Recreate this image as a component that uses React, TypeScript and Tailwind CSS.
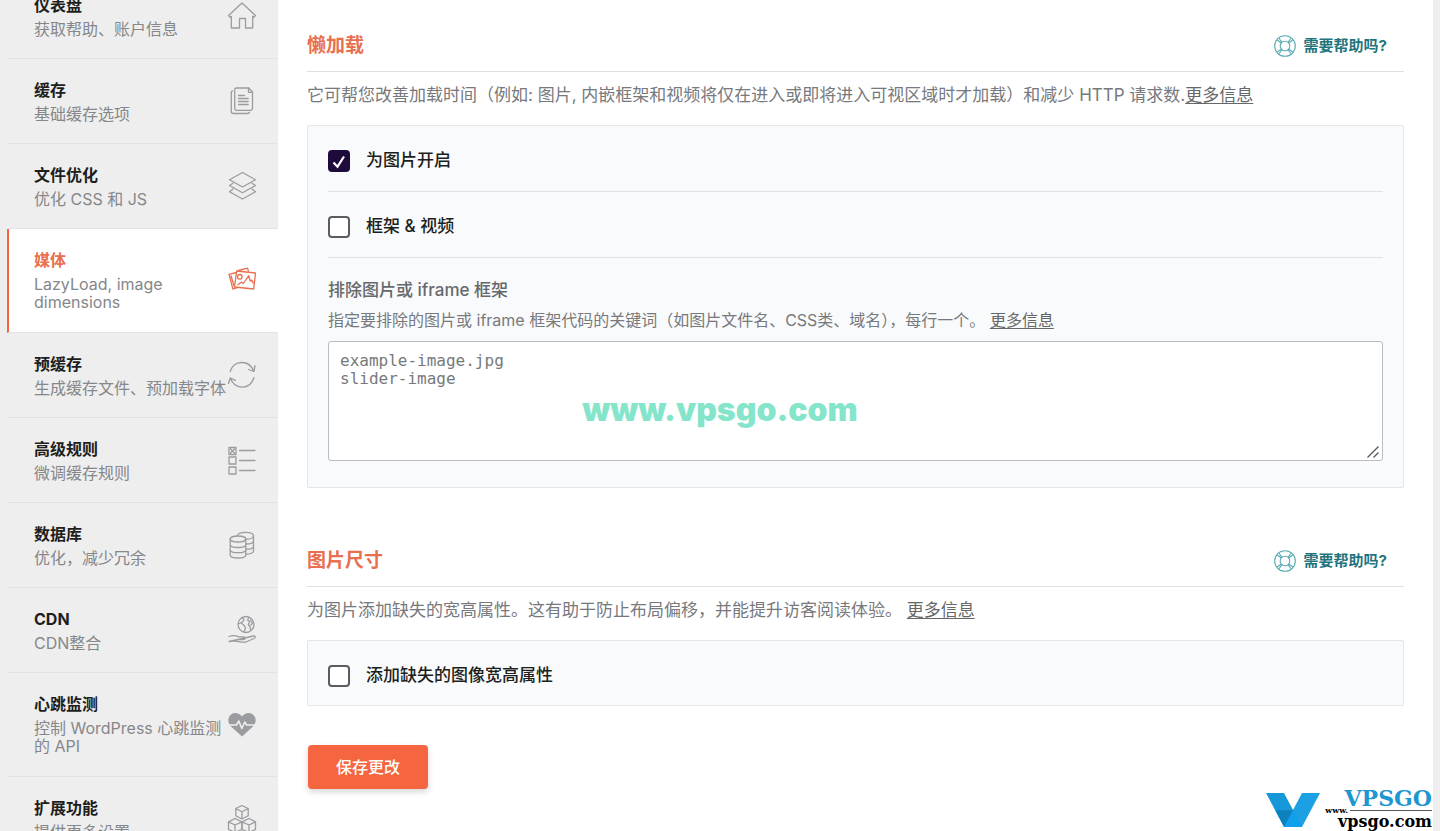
import type { ReactNode } from "react";

function Icon({ children }: { children: ReactNode }) {
  return (
    <svg
      className="size-[30px] shrink-0"
      viewBox="0 0 30 30"
      fill="none"
      stroke="currentColor"
      strokeWidth="1.3"
      strokeLinecap="round"
      strokeLinejoin="round"
      aria-hidden="true"
    >
      {children}
    </svg>
  );
}

const icons = {
  home: (
    <Icon>
      <path d="M1.500 14.500 15 2l13.500 12.500-1.800 1.700-1-.9V27h-7.200v-9.500h-6V27H4.300V15.300l-1 .9z" />
    </Icon>
  ),
  pages: (
    <Icon>
      <path d="M9.500 2h12.200l3.800 4v16.500c0 1.200-.6 1.800-1.800 1.800H9.500c-1.200 0-1.800-.6-1.800-1.800V3.800C7.700 2.600 8.300 2 9.500 2z" />
      <path d="M21.500 2v4.300h4M5.500 5c-.8.200-1.200.7-1.200 1.600V25.500c0 1.300.6 2 2 2h14.200c1 0 1.700-.4 2-1.200" />
      <path d="M11.500 9.500h6M11.500 12.500h9.700M11.500 15.500h9.700M11.500 18.500h9.700" />
    </Icon>
  ),
  layers: (
    <Icon>
      <path d="M15.500 1.500 28.500 8.800 15.500 16 2.500 8.800z" />
      <path d="M6 12.200 2.500 14.500l13 7.300 13-7.300-3.500-2.300" />
      <path d="M6 18 2.500 20.800l13 7.200 13-7.200L25 18" />
    </Icon>
  ),
  photos: (
    <Icon>
      <path d="M9.700 6 28.500 8 26.700 24 7.500 22z" />
      <path d="M9.500 7.500 2 9.300l3.900 14.700 4.500-1.400M11.500 5.500l9-2.300 1 3M4 10.800l3 10" />
      <circle cx="12.800" cy="11.800" r="2.300" />
      <path d="m10.800 19.700 3.500-2.500 2 1.300 5.400-7.800 1.600 5.400 1.500-1 1.500 3" />
    </Icon>
  ),
  refresh: (
    <Icon>
      <path d="M3.200 11.500C6.500 0 22 -1 27 11.500M28 5.700 27 11.500l-5.500-2M27 17.500C23 30.500 8 30 3.200 18M1.500 23.500l1.700-5.500 5.200 2.300" />
    </Icon>
  ),
  list: (
    <Icon>
      <path d="M2 2.500h7v7H2zM2 12h7v7H2zM2 22h7v7H2zM12.500 5.500h15.500M12.500 15.500h15.500M12.500 25.500h15.500M3.500 4l4 4M7.500 4l-4 4" />
    </Icon>
  ),
  database: (
    <Icon>
      <ellipse cx="11" cy="9" rx="7.800" ry="3" />
      <path d="M3.200 9v16c0 4 15.600 4 15.600 0V9M3.200 14.500c0 4 15.600 4 15.600 0M3.200 19.700c0 4 15.600 4 15.600 0" />
      <path d="M10.500 5.700c.5-4.500 16-4.500 16 0v15.500c0 1.500-3 3-7.500 3M26.500 5.700c0 2-3 3.500-7.500 3.500M26.500 11c0 2-3 3-7.500 3M26.500 16.200c0 2-3 3-7.500 3" />
    </Icon>
  ),
  globe: (
    <Icon>
      <circle cx="19" cy="9.500" r="8" />
      <path d="m14.500 3 2.500 1-1 2.500-3.500 2-1-.2M14.800 8.500l2.500 2 1.200 3-1.500 3M22 2.500 20.500 5l2.200 1.500-1.400 3 1.500 2 .9 3.500M23.500 5l2 3-1.500 2" />
      <path d="M2 21.500c4.200-1.500 6.700-1 9.500.3h5c2.500 0 2.300 2.500 0 2.700h-4.500M18 23l8-2c2.500-.5 3 1.500 1 2.500l-8 3.500c-5 1-8.500-1.500-12.500-.8l-4.500.3z" />
    </Icon>
  ),
  heart: (
    <Icon>
      <path
        d="M15 27.500 4 17.500C-1 12.500 1.500 4.500 8 4c3 0 5.500 1.200 7 3.500 1.500-2.300 4-3.500 7-3.500 6.500.5 9 8.500 4 13.500z"
        fill="currentColor"
        stroke="none"
      />
      <path d="M1.500 16h8l2.300-4 3 7.500 3-6.500 1.700 3h9" stroke="#eeeeee" strokeWidth="1.600" />
    </Icon>
  ),
  cubes: (
    <Icon>
      <path d="m15 1.500 6.200 3v7.200L15 15 8.800 11.700V4.500zM8.800 4.500 15 7.800l6.200-3.300M15 7.800V15" />
      <path d="m8 14.500 7 3.300v7.500L8 28.500l-6.500-3.200v-7.500zM1.500 17.800 8 21l7-3.200M8 21v7.500" />
      <path d="m22 14.500 6.500 3.300v7.500L22 28.500l-7-3.200v-7.500zM15 17.800l7 3.200 6.500-3.200M22 21v7.500" />
    </Icon>
  ),
};

type NavEntry = { title: string; text: string; icon: ReactNode; tall?: boolean; active?: boolean };

const entries: NavEntry[] = [
  { title: "仪表盘", text: "获取帮助、账户信息", icon: icons.home },
  { title: "缓存", text: "基础缓存选项", icon: icons.pages },
  { title: "文件优化", text: "优化 CSS 和 JS", icon: icons.layers },
  { title: "媒体", text: "LazyLoad, image dimensions", icon: icons.photos, tall: true, active: true },
  { title: "预缓存", text: "生成缓存文件、预加载字体", icon: icons.refresh },
  { title: "高级规则", text: "微调缓存规则", icon: icons.list },
  { title: "数据库", text: "优化，减少冗余", icon: icons.database },
  { title: "CDN", text: "CDN整合", icon: icons.globe },
  { title: "心跳监测", text: "控制 WordPress 心跳监测的 API", icon: icons.heart, tall: true },
  { title: "扩展功能", text: "提供更多设置", icon: icons.cubes },
];

function NavItem({ entry }: { entry: NavEntry }) {
  return (
    <a
      href="#"
      aria-current={entry.active ? "page" : undefined}
      className={`flex items-center border-b border-l-2 border-b-[#e0e2e6] pr-[21px] pb-px pl-[25px] ${
        entry.tall ? "h-[104px]" : "h-[85px]"
      } ${entry.active ? "border-l-[#f56640] bg-white text-[#e8704f]" : "border-l-transparent text-[#9a9c9f]"}`}
    >
      <span className="flex-1">
        <span
          className={`block text-base leading-[22px] font-bold ${
            entry.active ? "text-[#e8704f]" : "text-[#1d1e20]"
          }`}
        >
          {entry.title}
        </span>
        <span className="mt-1 block text-base leading-[18px] text-[#85878a]">{entry.text}</span>
      </span>
      {entry.icon}
    </a>
  );
}

function SectionHeader({ title }: { title: string }) {
  return (
    <header className="flex h-[52px] items-center justify-between border-b border-[#dfe0e2] pr-[17px]">
      <h2 className="text-[19px] leading-6 font-bold text-[#e8704f]">{title}</h2>
      <a href="#" className="flex items-center gap-2 text-[15px] leading-5 font-bold text-[#1f757d]">
        <svg
          className="size-[22px] text-[#5aabb3]"
          viewBox="0 0 22 22"
          fill="none"
          stroke="currentColor"
          strokeWidth="1.1"
          aria-hidden="true"
        >
          <circle cx="11" cy="11" r="10.300" />
          <circle cx="11" cy="11" r="4.800" />
          <path d="m3.200 5 4.200 3M5 3.200l3 4.200M18.800 5l-4.200 3M17 3.200l-3 4.200M3.200 17l4.200-3M5 18.800l3-4.200M18.800 17l-4.200-3M17 18.800l-3-4.200" />
        </svg>
        需要帮助吗?
      </a>
    </header>
  );
}

function MoreLink() {
  return (
    <a href="#" className="text-[#666769] underline underline-offset-2">
      更多信息
    </a>
  );
}

function CheckRow({
  id,
  label,
  checked = false,
  divided = false,
}: {
  id: string;
  label: string;
  checked?: boolean;
  divided?: boolean;
}) {
  return (
    <div className={`flex items-start gap-4 pt-6 ${divided ? "h-[66px] border-b border-[#dfe1e6]" : "h-16"}`}>
      <span className="grid shrink-0">
        <input
          id={id}
          type="checkbox"
          defaultChecked={checked}
          className="peer col-start-1 row-start-1 size-[22px] appearance-none rounded-[4px] border-2 border-[#5b5c60] bg-white checked:border-[#1f0a3c] checked:bg-[#1f0a3c]"
        />
        <svg
          className="pointer-events-none invisible col-start-1 row-start-1 size-[22px] peer-checked:visible"
          viewBox="0 0 22 22"
          fill="none"
          stroke="white"
          strokeWidth="2.200"
          aria-hidden="true"
        >
          <path d="m5.500 12.500 4 4.200L16 6.500" />
        </svg>
      </span>
      <label htmlFor={id} className="text-[17px] leading-5 font-medium text-[#1d1e20]">
        {label}
      </label>
    </div>
  );
}

function SiteMark() {
  return (
    <div className="pointer-events-none absolute right-2 bottom-0 flex items-end">
      <svg className="mr-3 mb-1 h-[34px] w-[54px]" viewBox="0 0 54 34" aria-hidden="true">
        <path d="M0 0h18l9 17-5 17h-4z" fill="#1597d8" />
        <path d="M36 0h18L36 34H18z" fill="#1ba0e4" />
        <path d="m9.500 17.500 17.500-.5 8.800 17H18z" fill="#0f9fec" />
        <path d="M9.500 17.500 27 17l-8.800 16.500z" fill="#0d80be" />
      </svg>
      <div className="flex w-[100px] flex-col items-end pb-px font-['DejaVu_Serif',serif] font-bold">
        <span className="text-[22px] leading-4 text-[#1e96d0]">VPSGO</span>
        <span className="flex items-center gap-[2px] text-[8px] leading-2 text-black">
          www.
          <span className="h-px w-[82px] bg-[#555]" />
        </span>
        <span className="text-base leading-4 text-black">vpsgo.com</span>
      </div>
    </div>
  );
}

export default function App() {
  return (
    <div
      lang="zh-CN"
      className="relative flex h-screen overflow-hidden bg-[#eeeeee] font-['Inter','Noto_Sans_CJK_SC',sans-serif]"
    >
      <nav className="-mt-[26px] ml-[7px] w-[271px] shrink-0">
        {entries.map((entry) => (
          <NavItem key={entry.title} entry={entry} />
        ))}
      </nav>

      <main className="mr-[7px] flex-1 bg-white px-[29px] pt-5">
        <section>
          <SectionHeader title="懒加载" />
          <p className="mt-3 text-[17px] leading-[22px] text-[#77797c]">
            它可帮您改善加载时间（例如: 图片, 内嵌框架和视频将仅在进入或即将进入可视区域时才加载）和减少 HTTP 请求数.
            <MoreLink />
          </p>
          <div className="mt-[19px] rounded-[2px] border border-[#e4e6ea] bg-[#f9fafb] px-5">
            <CheckRow id="lazy-images" label="为图片开启" checked divided />
            <CheckRow id="lazy-frames" label="框架 & 视频" divided />
            <div className="flex flex-col pt-5 pb-[26px]">
              <label htmlFor="excluded" className="text-[17px] leading-6 font-medium text-[#66686b]">
                排除图片或 iframe 框架
              </label>
              <p className="mt-2 text-base leading-5 text-[#77797c]">
                指定要排除的图片或 iframe 框架代码的关键词（如图片文件名、CSS类、域名），每行一个。 <MoreLink />
              </p>
              <div className="relative mt-[11px] grid">
                <textarea
                  id="excluded"
                  placeholder={"example-image.jpg\nslider-image"}
                  className="h-[120px] resize-none rounded-[3px] border border-[#b9bcc4] bg-white px-[11px] py-[10px] font-['DejaVu_Sans_Mono',monospace] text-base leading-[18px] text-[#444] placeholder:text-[#77797c]"
                />
                <svg
                  className="pointer-events-none absolute right-1 bottom-[3px] size-3 text-[#555]"
                  viewBox="0 0 12 12"
                  stroke="currentColor"
                  strokeWidth="1.300"
                  aria-hidden="true"
                >
                  <path d="M.5 11.500 11.500.5M6.500 11.500l5-5" />
                </svg>
              </div>
            </div>
          </div>
        </section>

        <section className="mt-[47px]">
          <SectionHeader title="图片尺寸" />
          <p className="mt-3 text-[17px] leading-[22px] text-[#77797c]">
            为图片添加缺失的宽高属性。这有助于防止布局偏移，并能提升访客阅读体验。 <MoreLink />
          </p>
          <div className="mt-[19px] rounded-[2px] border border-[#e4e6ea] bg-[#f9fafb] px-5">
            <CheckRow id="image-dimensions" label="添加缺失的图像宽高属性" />
          </div>
        </section>

        <button
          type="button"
          className="mt-[39px] ml-px h-11 w-[120px] rounded-[4px] bg-[#f56640] text-base font-medium text-white shadow-[0_3px_6px_rgba(0,0,0,0.16)]"
        >
          保存更改
        </button>
      </main>

      <div className="pointer-events-none absolute inset-x-0 top-[392px] text-center font-['Inter',sans-serif] text-[32px] leading-9 font-black text-[#85e5cb]">
        www.vpsgo.com
      </div>
      <SiteMark />
    </div>
  );
}
